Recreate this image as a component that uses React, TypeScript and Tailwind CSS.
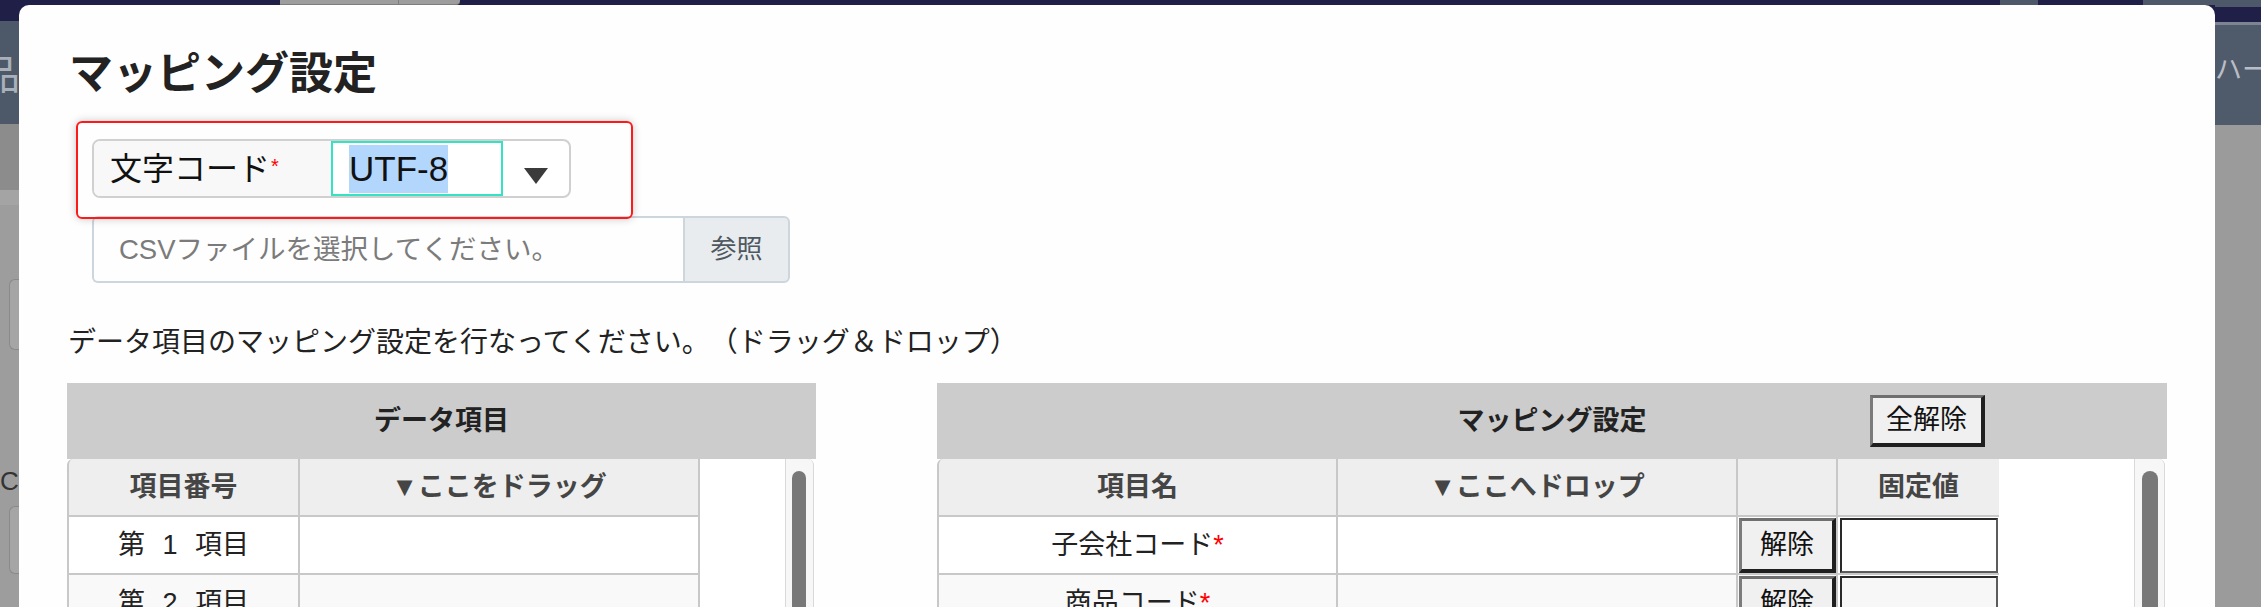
import React from "react";

const LINE = "border-[#c8c8c8]";

function ScrollTrack({ wide }: { wide?: boolean }) {
  return (
    <div
      className={
        wide
          ? "w-[31px] shrink-0 border-x border-[#d9d9d9] bg-[#f6f7f6] rounded-tr-[6px] pl-[7px] pt-[12px]"
          : "w-[29px] shrink-0 border-x border-[#d9d9d9] bg-[#f6f7f6] rounded-tr-[6px] pl-[6px] pt-[12px]"
      }
    >
      <div className={wide ? "w-[16px] h-[320px] rounded-full bg-[#787878]" : "w-[14px] h-[320px] rounded-full bg-[#787878]"} />
    </div>
  );
}

function ClassicButton({ label, full }: { label: string; full?: boolean }) {
  return (
    <button
      className={`${
        full ? "w-full h-full" : "w-[115px] h-[52px]"
      } bg-[#eff0ef] border-t-[3px] border-l-[3px] border-b-[4px] border-r-[4px] border-t-[#6f6f6f] border-l-[#7b7b7b] border-b-[#1f1f1f] border-r-[#1f1f1f] text-[27px] leading-none text-[#111] flex items-center justify-center`}
    >
      {label}
    </button>
  );
}

function LeftTable() {
  const rows = ["第 1 項目", "第 2 項目"];
  return (
    <div className="w-[749px] shrink-0 flex flex-col">
      {/* header */}
      <div className="h-[76px] shrink-0 bg-[#cccccc] flex items-center justify-center text-[27px] font-bold text-[#222]">
        データ項目
      </div>
      <div className="flex shrink-0 bg-white pr-[2px]">
        <div className="w-[633px] shrink-0 flex flex-col">
          <div className={`flex h-[58px] shrink-0 bg-[#eeeeee] border-l-2 border-b-2 ${LINE} rounded-tl-[6px] text-[27px] font-bold text-[#454545]`}>
            <div className={`w-[231px] border-r-2 ${LINE} flex items-center justify-center`}>項目番号</div>
            <div className={`w-[400px] border-r-2 ${LINE} flex items-center justify-center`}>▼ここをドラッグ</div>
          </div>
          {rows.map((r, i) => (
            <div
              key={r}
              className={`flex h-[58px] shrink-0 border-l-2 border-b-2 ${LINE} text-[27px] text-[#222] ${
                i % 2 === 0 ? "bg-white" : "bg-[#f9f9f9]"
              }`}
            >
              <div className={`w-[231px] border-r-2 ${LINE} flex items-center justify-center [word-spacing:10px]`}>{r}</div>
              <div className={`w-[400px] border-r-2 ${LINE}`} />
            </div>
          ))}
        </div>
        <div className="flex-1" />
        <ScrollTrack />
      </div>
    </div>
  );
}

function RightTable() {
  const rows = ["子会社コード", "商品コード"];
  return (
    <div className="w-[1230px] shrink-0 flex flex-col">
      <div className="h-[76px] shrink-0 bg-[#cccccc] grid grid-cols-[1fr_auto_1fr] items-center">
        <div />
        <div className="text-[27px] font-bold text-[#222]">マッピング設定</div>
        <div className="pl-[223px] flex items-center">
          <ClassicButton label="全解除" />
        </div>
      </div>
      <div className="flex shrink-0 bg-white pr-[2px]">
        <div className="w-[1062px] shrink-0 flex flex-col">
          <div className={`flex h-[58px] shrink-0 bg-[#eeeeee] border-l-2 border-b-2 ${LINE} rounded-tl-[6px] text-[27px] font-bold text-[#454545]`}>
            <div className={`w-[399px] border-r-2 ${LINE} flex items-center justify-center`}>項目名</div>
            <div className={`w-[400px] border-r-2 ${LINE} flex items-center justify-center`}>▼ここへドロップ</div>
            <div className={`w-[100px] border-r-2 ${LINE}`} />
            <div className="w-[161px] flex items-center justify-center">固定値</div>
          </div>
          {rows.map((r, i) => (
            <div
              key={r}
              className={`flex h-[58px] shrink-0 border-l-2 border-b-2 ${LINE} text-[27px] text-[#222] ${
                i % 2 === 0 ? "bg-white" : "bg-[#f9f9f9]"
              }`}
            >
              <div className={`w-[399px] border-r-2 ${LINE} flex items-center justify-center`}>
                {r}
                <span className="text-[#ff0000]">*</span>
              </div>
              <div className={`w-[400px] border-r-2 ${LINE}`} />
              <div className={`w-[100px] border-r-2 ${LINE} pl-[1px] pt-[1px]`}>
                <ClassicButton label="解除" full />
              </div>
              <div className="w-[161px] pl-[2px] pt-[1px] bg-white">
                <input
                  className={`w-[158px] h-[55px] border-2 border-t-[#2a2a2a] border-l-[#2a2a2a] border-b-[#5c5c5c] border-r-[#5c5c5c] ${
                    i % 2 === 0 ? "bg-white" : "bg-[#f7f7f7]"
                  } outline-none`}
                />
              </div>
            </div>
          ))}
        </div>
        <div className="flex-1" />
        <ScrollTrack wide />
      </div>
    </div>
  );
}

function Modal() {
  return (
    <div className="flex-1 bg-[#fefefe] rounded-t-[10px] px-[48px] overflow-hidden">
      {/* Title */}
      <h1 className="mt-[47px] h-[44px] text-[44px] leading-[44px] font-bold text-[#222] pl-[2px]">マッピング設定</h1>

      {/* 文字コード select */}
      <div className="relative ml-[25px] mt-[43px] w-[479px]">
        <div className="flex h-[59px] border-2 border-[#d0d0d0] rounded-[8px] overflow-hidden bg-white">
          <div className="w-[237px] bg-[#f7f8f7] flex items-center pl-[16px] text-[32px] text-[#111]">
            文字コード
            <span className="text-[20px] text-[#ff0000] self-start mt-[10px] ml-[1px]">*</span>
          </div>
          <div className="w-[172px] border-2 border-[#36e2c4] flex items-center pl-[16px]">
            <span className="bg-[#b3d6fd] text-[35px] leading-[48px] text-[#111]">UTF-8</span>
          </div>
          <div className="flex-1 flex items-center justify-center">
            <svg width="24" height="16" viewBox="0 0 24 16" className="mt-[15px]">
              <path d="M0 0H24L12 16Z" fill="#3b3b3b" />
            </svg>
          </div>
        </div>
        {/* red highlight annotation */}
        <div className="absolute left-[-16px] top-[-18px] w-[557px] h-[98px] border-2 border-[#ff1a1a] rounded-[6px] shadow-[0_0_8px_rgba(0,0,0,0.22)] pointer-events-none" />
      </div>

      {/* CSV file */}
      <div className="ml-[25px] mt-[18px] flex h-[67px] w-[698px]">
        <div className="w-[591px] border-2 border-r-0 border-[#cdd5dd] rounded-l-[6px] flex items-center pl-[25px] text-[27.5px] text-[#7b7b7b]">
          CSVファイルを選択してください。
        </div>
        <button className="w-[107px] border-2 border-[#cdd5dd] rounded-r-[6px] bg-[#e9ecef] text-[26px] text-[#4f5760]">
          参照
        </button>
      </div>

      <p className="mt-[46px] text-[28px] leading-[27px] text-[#222] pl-[1px]">
        データ項目のマッピング設定を行なってください。（ドラッグ＆ドロップ）
      </p>

      <div className="mt-[27px] flex gap-[121px]">
        <LeftTable />
        <RightTable />
      </div>
    </div>
  );
}

export default function App() {
  return (
    <div className="w-[2261px] h-[607px] overflow-hidden flex bg-[#9c9c9c] [text-spacing-trim:space-all] font-['Liberation_Sans','Noto_Sans_CJK_JP',sans-serif]">
      {/* dimmed page, left edge */}
      <div className="w-[19px] shrink-0 flex flex-col">
        <div className="h-[21px] bg-[#1f1f47]" />
        <div className="h-[103px] bg-[#4d5868] overflow-hidden">
          <span className="block -ml-[20px] mt-[30px] text-[40px] leading-[48px] text-[#a9b0ba]">品</span>
        </div>
        <div className="h-[66px] bg-[#8c8c8c]" />
        <div className="h-[15px] bg-[#a4a4a4]" />
        <div className="flex-1 bg-[#9d9d9d] pt-[74px] pl-[9px] flex flex-col">
          <div className="h-[71px] rounded-l-[6px] border border-r-0 border-[#8a8a8a] bg-[#a5a5a5]" />
          <span className="-ml-[9px] mt-[118px] text-[26px] leading-[26px] text-[#333]">C</span>
          <div className="mt-[12px] h-[68px] rounded-l-[6px] border border-r-0 border-[#8a8a8a] bg-[#a5a5a5]" />
        </div>
      </div>

      {/* middle: top bar strip and modal */}
      <div className="w-[2196px] shrink-0 flex flex-col bg-[#1f1f47]">
        <div className="h-[5px] flex shrink-0">
          <div className="w-[261px] bg-[#1f1f47]" />
          <div className="w-[119px] bg-[#9d9d9d] border-r border-b border-[#7d7d7d]" />
          <div className="w-[61px] bg-[#9d9d9d] border-b border-[#7d7d7d] rounded-br-[4px]" />
          <div className="w-[1540px] bg-[#1f1f47]" />
          <div className="w-[38px] bg-[#4d5868]" />
          <div className="w-[105px] bg-[#1f1f47]" />
          <div className="w-[72px] bg-[#4d5868]" />
        </div>
        <Modal />
      </div>

      {/* dimmed page, right edge */}
      <div className="w-[46px] shrink-0 flex flex-col">
        <div className="h-[7px] bg-[#4d5868]" />
        <div className="h-[15px] bg-[#1f1f47]" />
        <div className="h-[3px] bg-[#7d8594]" />
        <div className="h-[100px] bg-[#4f5b6b] overflow-hidden">
          <span className="block mt-[30px] text-[27px] leading-[30px] text-[#b9bec6] whitespace-nowrap">ハー</span>
        </div>
        <div className="flex-1 bg-[#9b9b9b]" />
      </div>
    </div>
  );
}
